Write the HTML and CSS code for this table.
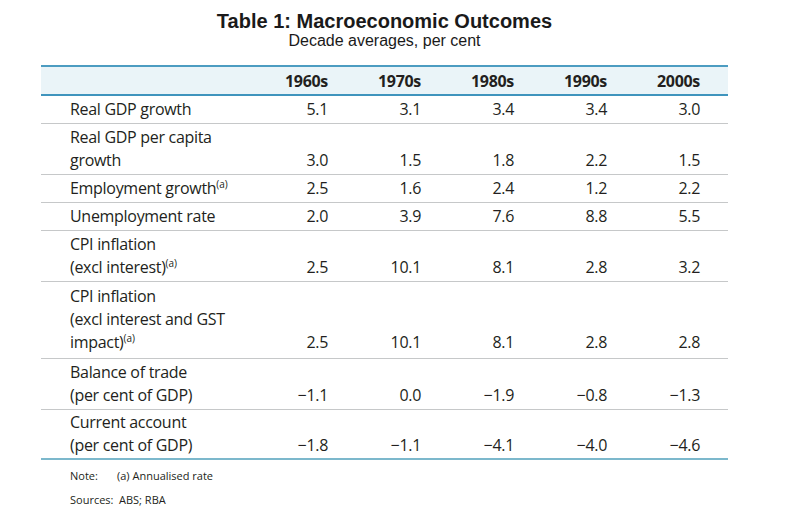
FILE: index.html
```html
<!DOCTYPE html>
<html lang="en">
<head>
<meta charset="utf-8">
<title>Table 1: Macroeconomic Outcomes</title>
<link rel="stylesheet" href="styles.css">
</head>
<body>
<div class="page">
  <div class="heading">
    <h1 class="title">Table 1: Macroeconomic Outcomes</h1>
    <p class="subtitle">Decade averages, per cent</p>
  </div>
  <table class="data">
    <thead>
      <tr>
        <th class="label"></th>
        <th>1960s</th>
        <th>1970s</th>
        <th>1980s</th>
        <th>1990s</th>
        <th>2000s</th>
      </tr>
    </thead>
    <tbody>
      <tr>
        <td class="label">Real GDP growth</td>
        <td>5.1</td><td>3.1</td><td>3.4</td><td>3.4</td><td>3.0</td>
      </tr>
      <tr>
        <td class="label">Real GDP per capita<br>growth</td>
        <td>3.0</td><td>1.5</td><td>1.8</td><td>2.2</td><td>1.5</td>
      </tr>
      <tr>
        <td class="label">Employment growth<sup>(a)</sup></td>
        <td>2.5</td><td>1.6</td><td>2.4</td><td>1.2</td><td>2.2</td>
      </tr>
      <tr>
        <td class="label">Unemployment rate</td>
        <td>2.0</td><td>3.9</td><td>7.6</td><td>8.8</td><td>5.5</td>
      </tr>
      <tr>
        <td class="label">CPI inflation<br>(excl interest)<sup>(a)</sup></td>
        <td>2.5</td><td>10.1</td><td>8.1</td><td>2.8</td><td>3.2</td>
      </tr>
      <tr class="tall">
        <td class="label">CPI inflation<br>(excl interest and GST<br>impact)<sup>(a)</sup></td>
        <td>2.5</td><td>10.1</td><td>8.1</td><td>2.8</td><td>2.8</td>
      </tr>
      <tr>
        <td class="label">Balance of trade<br>(per cent of GDP)</td>
        <td>&minus;1.1</td><td>0.0</td><td>&minus;1.9</td><td>&minus;0.8</td><td>&minus;1.3</td>
      </tr>
      <tr class="last">
        <td class="label">Current account<br>(per cent of GDP)</td>
        <td>&minus;1.8</td><td>&minus;1.1</td><td>&minus;4.1</td><td>&minus;4.0</td><td>&minus;4.6</td>
      </tr>
    </tbody>
  </table>
  <div class="notes">
    <p class="note"><span class="key key-note">Note:</span>(a) Annualised rate</p>
    <p class="note"><span class="key key-src">Sources:</span>ABS; RBA</p>
  </div>
</div>
</body>
</html>
```

FILE: styles.css
```css
html, body {
  margin: 0;
  padding: 0;
  background: #ffffff;
}

.page {
  width: 794px;
  padding: 10px 0 0 41px;
  box-sizing: border-box;
  color: #231f20;
  font-family: "Open Sans", "Noto Sans", sans-serif;
}

.heading {
  width: 687px;
  text-align: center;
  font-family: "Liberation Sans", Arial, sans-serif;
  color: #1a1a1a;
}

.title {
  margin: 0;
  font-size: 20px;
  line-height: 22px;
  font-weight: bold;
}

.subtitle {
  margin: 0;
  font-size: 16px;
  line-height: 18px;
  padding-bottom: 15px;
}

.data {
  width: 687px;
  border-collapse: collapse;
  table-layout: fixed;
  font-size: 16px;
  letter-spacing: -0.3px;
}

.data th,
.data td {
  width: 93px;
  padding: 2px 28px 2px 0;
  text-align: right;
  vertical-align: bottom;
  line-height: 23px;
  box-sizing: border-box;
}

.data th.label,
.data td.label {
  width: 222px;
  padding-left: 29px;
  padding-right: 0;
  text-align: left;
}

.data thead tr {
  background: #eaf4f8;
  border-top: 2px solid #4c9cc1;
  border-bottom: 2px solid #3f94bd;
}

.data thead th {
  font-weight: bold;
  padding-top: 3px;
  padding-bottom: 1px;
}

.data tbody tr {
  border-bottom: 1px solid #c6c8c9;
}

.data tbody tr.tall td {
  padding-bottom: 4px;
  padding-top: 3px;
}

.data tbody tr.last {
  border-bottom: 2px solid #7cb8cc;
}

.data tbody tr.last td {
  padding-bottom: 1px;
  padding-top: 1px;
}

.data sup {
  font-size: 10px;
  line-height: 0;
  vertical-align: 6px;
  letter-spacing: 0;
}

.notes {
  padding: 9px 0 0 29px;
  font-size: 11px;
  color: #231f20;
}

.note {
  margin: 0 0 10px 0;
  line-height: 14px;
}

.key {
  display: inline-block;
}

.key-note {
  width: 47px;
}

.key-src {
  width: 49px;
}
```
